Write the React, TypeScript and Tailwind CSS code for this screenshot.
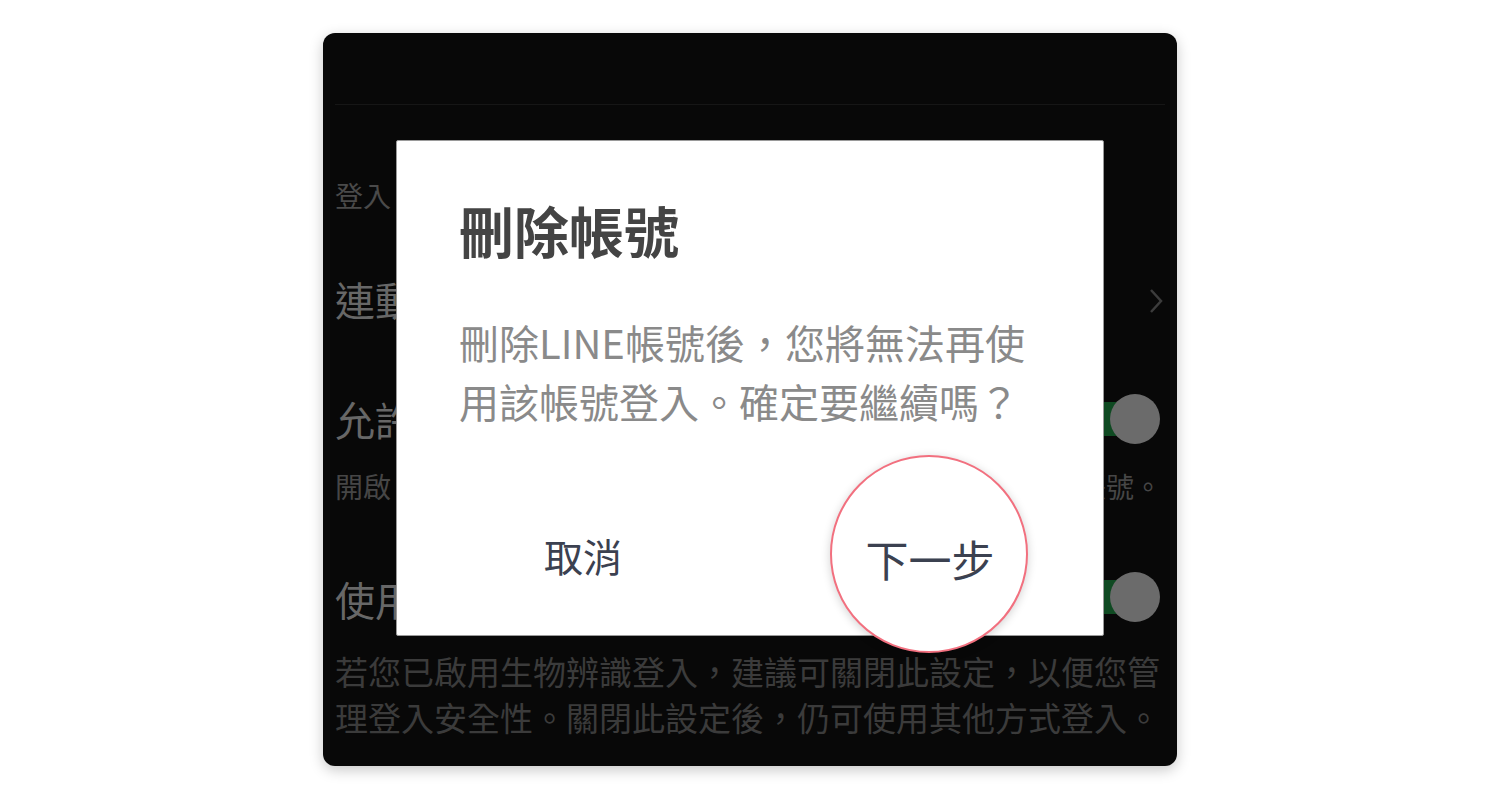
import React from "react";

const font = { fontFamily: '"Noto Sans CJK TC", "Noto Sans", sans-serif' };

function Toggle() {
  return (
    <div className="relative w-[84px] h-[50px] shrink-0 mr-[2px]">
      <div className="absolute left-0 right-[14px] top-[8px] h-[34px] rounded-full bg-[#0f4a22]" />
      <div className="absolute right-[3px] top-0 w-[50px] h-[50px] rounded-full bg-[#6b6b6b]" />
    </div>
  );
}

export default function App() {
  return (
    <div className="w-[1500px] h-[800px] bg-white flex justify-center pt-[33px]" style={font}>
      <div className="relative w-[854px] h-[733px] rounded-xl bg-[#080808] shadow-[0_4px_14px_rgba(0,0,0,0.22)] px-[12px] pb-[25px]">
        <div className="h-[72px] border-b border-[#161616]" />
        <div className="mt-[70px] text-[28px] leading-[40px] text-[#4a4a4a]">登入</div>
        <div className="mt-[56px] h-[56px] flex items-center justify-between">
          <span className="text-[40px] leading-[56px] text-[#676767]">連動</span>
          <svg width="16" height="28" viewBox="0 0 16 28" className="mr-[1px] mt-[4px]">
            <polyline points="3,3 13,14 3,25" fill="none" stroke="#3c3c3c" strokeWidth="2.5" />
          </svg>
        </div>
        <div className="mt-[64px] h-[56px] flex items-center justify-between">
          <span className="text-[40px] leading-[56px] text-[#676767]">允許</span>
          <Toggle />
        </div>
        <div className="mt-[19px] h-[40px] flex justify-between text-[28px] leading-[40px] text-[#464646]">
          <span>開啟</span>
          <span className="mr-[3px]">帳號。</span>
        </div>
        <div className="mt-[65px] h-[56px] flex items-center justify-between">
          <span className="text-[40px] leading-[56px] text-[#676767]">使用</span>
          <div className="-mt-[4px]"><Toggle /></div>
        </div>
        <div className="mt-[21px] text-[33px] leading-[46px] text-[#3b3b3b] whitespace-nowrap">
          若您已啟用生物辨識登入，建議可關閉此設定，以便您管
          <br />
          理登入安全性。關閉此設定後，仍可使用其他方式登入。
        </div>

        <div className="absolute left-[73px] top-[107px] w-[708px] h-[496px] bg-white rounded-[2px] border border-[#9a9a9a]">
          <div className="pl-[62px] pt-[50px]">
            <div className="text-[55px] leading-[76px] font-bold text-[#444444]">刪除帳號</div>
            <div className="mt-[46px] text-[40px] leading-[59px] text-[#8a8a8a] whitespace-nowrap">
              刪除LINE帳號後，您將無法再使
              <br />
              用該帳號登入。確定要繼續嗎？
            </div>
          </div>
          <div className="absolute left-[86px] top-[386px] w-[200px] h-[56px] flex items-center justify-center text-[39px] text-[#3b4150]">
            取消
          </div>
          <div className="absolute left-[433px] top-[314px] w-[198px] h-[198px] rounded-full bg-white border-[2.5px] border-[#f2707f] shadow-[0_2px_10px_rgba(0,0,0,0.18)] flex items-center justify-center">
            <span className="text-[43px] leading-[56px] text-[#3b4150] mt-[8px] ml-[2px]">下一步</span>
          </div>
        </div>
      </div>
    </div>
  );
}
